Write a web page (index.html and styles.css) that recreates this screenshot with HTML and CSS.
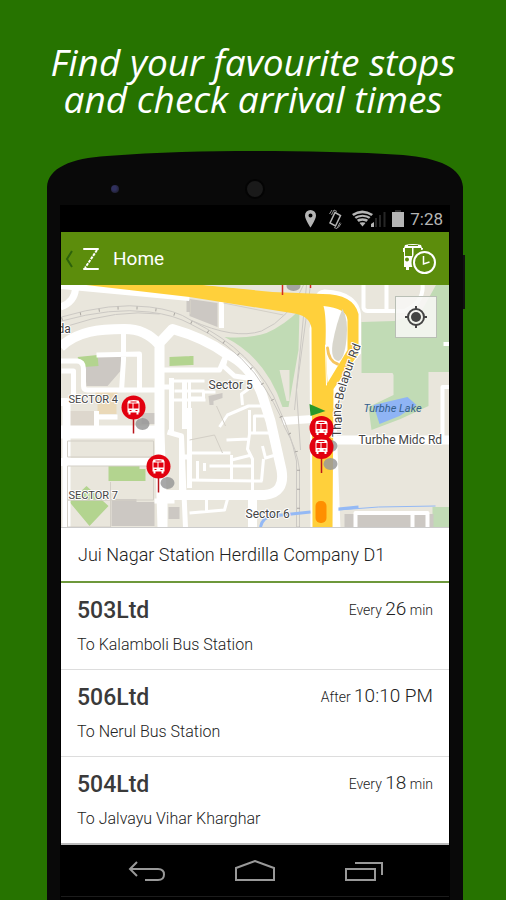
FILE: index.html
```html
<!DOCTYPE html>
<html lang="en">
<head>
<meta charset="utf-8">
<meta name="viewport" content="width=device-width, initial-scale=1">
<title>Home</title>
<link rel="stylesheet" href="styles.css">
</head>
<body>
<h1 class="headline">Find your favourite stops<br>and check arrival times</h1>
<main class="phone">
  <div class="cap">
    <svg class="cap-shape" viewBox="0 0 416 54" preserveAspectRatio="none" aria-hidden="true"><path d="M0 54V36C1 17 24 7 60 5C110 1 160 0 208 0S310 1 356 4C392 7 415 17 416 36V54Z"/></svg>
    <span class="sensor"></span>
    <span class="speaker"></span>
  </div>
  <span class="power"></span>
  <div class="screen">
    <div class="status">
      <svg width="84" height="20" viewBox="302 208 84 20" aria-hidden="true">
        <path fill="#b5b5b5" fill-rule="evenodd" d="M310.500 209a5.500 5.500 0 0 1 5.500 5.500c0 4-5.500 12-5.500 12s-5.500-8-5.500-12a5.500 5.500 0 0 1 5.500-5.500zm0 3.500a2 2 0 1 0 0 4 2 2 0 0 0 0-4z"/>
        <g fill="none" stroke="#b5b5b5"><path stroke-width="1.500" d="M335 211.500l5.500 3-5 10.500-5.500-3z"/><path stroke-width=".8" d="M331.500 214l2.500-5 3 1.500M329.500 213l2.500-4M334 226.500l3 1 3-6M338.500 226.500l2.500-4"/></g>
        <path fill="#b5b5b5" d="M352 213q10-7 21 0l-10.500 12.500z"/>
        <path fill="none" stroke="#000" stroke-width="1.300" d="M353 216q9.500-6 19 0M355 219q7.500-5 15 0M358 222q4.500-3 9 0"/>
        <path fill="#b5b5b5" d="M371 226v-3l3-2v5z"/><path stroke="#262626" stroke-width="2" d="M376 226v-9M380 226v-12M384.500 226v-15"/>
      </svg>
      <svg width="12" height="18" viewBox="0 0 12 18" aria-hidden="true"><path fill="#303030" d="M3 0h6v2H3z"/><path fill="#b5b5b5" d="M0 2h12v15H0z"/></svg>
      <time>7:28</time>
    </div>
    <header class="bar">
      <button class="up" aria-label="Back">
        <svg width="8" height="18" viewBox="0 0 8 18"><path d="M7 1L2 9l5 8" fill="none" stroke="#2d620b" stroke-width="2"/></svg>
        <svg width="16" height="22" viewBox="0 0 16 22"><path d="M1 1h14M1 21h14" fill="none" stroke="#fff" stroke-width="2" stroke-linecap="round"/><path d="M14 2L2 20" stroke="#fff" stroke-width="2" stroke-dasharray="3 1"/></svg>
      </button>
      <h2>Home</h2>
      <button class="schedule" aria-label="Arrival times">
        <svg width="36" height="32" viewBox="402 241 36 32"><path fill="#fff" fill-rule="evenodd" d="M405 243q8-2 16 0l1 3h1v4h-1v15h-13v3h-3v-3h-2v-15h-1v-4h1zm3 0v1h10v-1zm-3 3v8h7v-8zm8.500 0v8h7.500v-8zm-6.500 9.500a2 2 0 1 0 0 4 2 2 0 0 0 0-4z"/><circle cx="424.500" cy="260.500" r="13" fill="#5c8d0c"/><circle cx="424.500" cy="260.500" r="10.500" fill="#5c8d0c" stroke="#fff" stroke-width="2"/><path d="M423.500 254v8l6-2" fill="none" stroke="#fff" stroke-width="1.500"/></svg>
      </button>
    </header>
    <section class="map" aria-label="Stops map">
      <svg class="map-art" viewBox="61 285 389 242" preserveAspectRatio="xMidYMid slice">
        <defs>
          <path id="rd" d="M342 437V407Q346 384 359 352L366 334"/>
          <g id="stop">
            <path d="M0 10V26" stroke="#b8161c" stroke-width="1.500"/>
            <circle r="12" fill="#e2000f"/>
            <path fill="#fff" fill-rule="evenodd" d="M-5-7Q0-8 5-7L6-5V5H5V7H3V5H-3V7H-5V5H-6V-5ZM-3-6v1h6v-1zM-5-4V1H-1V-4ZM0-4V1H5V-4ZM-4 2.500v1h2v-1zM2 2.500v1h2v-1z"/>
          </g>
        </defs>
        <path fill="#e9e6dc" d="M61 284h389v244H61z"/>
        <g fill="#c1dbb5">
          <path d="M225 337q24 2 42-4 18-8 33-23l-1 40-10 57h-6q-17-50-58-70z"/>
          <path d="M362 322l33-1 26-8 16-29h13v88h-21v34l-28 13-29 11-3-23 25-12 0-20-1-2H362z"/>
          <path d="M433 507h17v20h-17z"/>
        </g>
        <path fill="#e9e6dc" d="M280 370h10v31h-3z"/>
        <path fill="#8fb4f5" d="M374 405l34-8 9 8-17 11-20 8z"/>
        <path fill="#ccc8c3" d="M190 299l28 4v24l-28-11zM187 300h4v12h-4zM100 356l23-2-2 17-13 15H87l-2-19zM112 499h25v27h-25zM137 502h18v24h-18zM169 507h11v12h-11zM209 396l14-3v5l-9 3v4h-4zM345 514h89v13h-89zM142 413h15v11h-15z"/>
        <path fill="#ddd7cd" d="M70 411h25v17H70z"/>
        <path fill="#ead9b8" d="M98 401h19v13H98zM96 390h22v10H96z"/>
        <g fill="#b3d48f"><path d="M78 357l20-2 1 11-15 1zM170 357l22-1v9l-22 1zM109 465h31v4h6v12h-37zM70 502l17-16 22 20-19 20zM190 356h4v9h-4z"/></g>
        <g fill="none" stroke="#fff" stroke-linejoin="round">
          <path stroke-width="8" d="M61 285L190 297"/>
          <path stroke-width="7" d="M76 289q-1 13-15 18"/>
          <path stroke-width="10" d="M61 347C78 331 100 329 125 329Q146 329 159 344L173 329Q205 338 227 354Q250 364 262 393L271 421 282 470Q286 493 265 495H163V527M160 342v90l3 95"/>
          <path stroke-width="13" d="M61 432h103"/>
          <path stroke-width="8" d="M61 462h104M61 402h6v125M283 421l30-2"/>
          <path stroke-width="5" d="M61 361h16q7 0 7 8v17q0 4 4 4h72v-1M97 355l43-1v37M124 331v29l-2 31M62 371h12v32M222 302v26M163 370h57l7-16M227 354l-3 12 11 10 19 3M97 411v23M98 417h20M163 387h9v-9M172 378v54M185 380v49M168 432l14 4 4 92M182 436v55M190 408v80M181 457h10M155 501h20"/>
          <path stroke-width="3" d="M173 381h32M175 391h30M190 380v29M190 398h14v-6h12M174 400h32M243 405l-1-11 7-5M220 427l8-12 21-9h17l3 6M250 410v24l-2 15 5 10v33M227 440l22-1M250 433h5v-17h13M254 433h16M210 466h43M190 480l73 1M263 446l3 12 10-3M264 459l-2 22M198 461v19M232 455v25M190 453h41M205 463v8M232 460l20-5M190 513l35-3 3-11M207 499v14"/>
          <path stroke-width="9" d="M253 496v31M333 440h117"/>
          <path stroke-width="4" d="M364 284v24q1 3 4 3h37q20-9 18-27M387 284v26M443 440v-53h7M444 344h6M356 527v-14h72v14M413 513v14M417 440v-2"/>
        </g>
        <g fill="none" stroke="#ccc9c4" stroke-width="1">
          <path d="M62 317Q112 302 150 307 176 310 191 320 225 337 245 357 270 382 280 410 291 432 297 461V527M62 321Q112 307 150 312 175 315 191 324 230 342 255 373 278 405 285 427 298 450 300 470V527M68 326Q118 309 160 314M191 320Q235 340 262 331 290 319 304 285M311 285L297 390 301 450M307 285L295 410"/>
          <path stroke="#aaa7a2" stroke-dasharray="1 18" stroke-width="3" d="M62 319Q112 304 150 309 176 312 191 322 230 342 250 366 273 395 284 423 298 445 299 466V527"/>
          <path stroke="#d3cfc6" d="M68 441h86v16H68zM68 466h86v34H68zM111 482v18M190 440l25-5 8 18M217 406l9 20M191 300v14M224 303l60 12M68 500h43v27H68z"/>
        </g>
        <g fill="none" stroke-linecap="round">
          <path stroke="#fff" stroke-width="22" d="M322 530L321 330"/>
          <path stroke="#fff" stroke-width="19" d="M325 299Q354 300 352 320V350Q331 375 329 400"/>
          <path stroke="#fff" stroke-width="8" d="M333 420L337 530"/>
          <path fill="#ffd03b" stroke="none" d="M78 284h115l80 8 50 2q31 0 36 20v40l-25 35-1 138h-20l-1-199q-2-13-20-15L190 297z"/>
          <path fill="#e9e6dc" stroke="none" d="M205 285h76l-1 6-42-3z"/>
          <path fill="#fff" stroke="none" d="M324 306q23 2 24 14v30l-20 33-2-40q1-27-2-37z"/>
          <path fill="#d8d6cc" stroke="none" d="M343 309q6 10 4 30-2 20-8 22-8-1-6-17 4-22 10-35z"/>
          <path stroke="#f6c55f" stroke-width="3" d="M328 348q1 13 10 16"/>
          <path stroke="#fff" stroke-width="1" d="M326 345l1 40"/>
        </g>
        <rect x="316" y="501" width="11" height="22" rx="5" fill="#ff8f00"/>
        <g fill="none" stroke="#94b9f5" stroke-width="3"><path d="M261 527q2-10 12-11l38-4M339 509l20-2"/><path stroke-width="1" d="M339 510l40-3 57-1"/></g>
        <g fill="#999" opacity=".85"><ellipse cx="294" cy="286" rx="7" ry="5"/><ellipse cx="143" cy="424" rx="7" ry="6"/><ellipse cx="168" cy="483" rx="7" ry="6"/><ellipse cx="331" cy="446" rx="7" ry="6"/><ellipse cx="331" cy="464" rx="7" ry="6"/></g>
        <path stroke="#d32b20" stroke-width="1.500" d="M283 285v10M311 285v3"/>
        <g class="labels">
          <text x="58" y="333" font-size="12">da</text>
          <text x="69" y="403" font-size="11">SECTOR 4</text>
          <text x="69" y="499" font-size="11">SECTOR 7</text>
          <text x="209" y="389" font-size="12">Sector 5</text>
          <text x="246" y="518" font-size="12">Sector 6</text>
          <text x="359" y="444" font-size="12">Turbhe Midc Rd</text>
          <text class="lake" x="364" y="412" font-size="11">Turbhe Lake</text>
          <text font-size="12"><textPath href="#rd">Thane-Belapur Rd</textPath></text>
        </g>
        <path fill="#29982a" d="M310 404l16 7-15 5z"/>
        <use href="#stop" x="134" y="407.500"/><use href="#stop" x="159" y="466.500"/><use href="#stop" x="322" y="428"/><use href="#stop" x="322" y="447"/>
      </svg>
      <button class="locate" aria-label="My location">
        <svg width="24" height="24" viewBox="0 0 24 24"><circle cx="12" cy="12" r="8" fill="none" stroke="#444" stroke-width="2"/><circle cx="12" cy="12" r="5" fill="#444"/><path d="M12 1v4M12 19v4M1 12h4M19 12h4" stroke="#444" stroke-width="2"/></svg>
      </button>
    </section>
    <h3 class="stop-name">Jui Nagar Station Herdilla Company D1</h3>
    <ul class="routes">
      <li><div class="line"><strong>503Ltd</strong><span class="when">Every <b>26</b> min</span></div><p>To Kalamboli Bus Station</p></li>
      <li><div class="line"><strong>506Ltd</strong><span class="when">After <b>10:10 PM</b></span></div><p>To Nerul Bus Station</p></li>
      <li><div class="line"><strong>504Ltd</strong><span class="when">Every <b>18</b> min</span></div><p>To Jalvayu Vihar Kharghar</p></li>
    </ul>
    <nav class="keys">
      <button aria-label="Back"><svg width="38" height="22" viewBox="0 0 38 22"><path d="M10 2L3 9l7 7M3 9h28q6 0 6 5.500T31 20H18"/></svg></button>
      <button aria-label="Home"><svg width="40" height="22" viewBox="0 0 40 22"><path d="M1 8L20 1l19 7v12H1z"/></svg></button>
      <button aria-label="Recent apps"><svg width="38" height="22" viewBox="0 0 38 22"><path d="M1 9h29v11H1zM10 3h27v12"/></svg></button>
    </nav>
  </div>
</main>
</body>
</html>
```

FILE: styles.css
```css
* { box-sizing: border-box; }
body {
  margin: 0;
  background: #267300;
  font-family: Roboto, "Liberation Sans", sans-serif;
  color: #222;
}
h1, h2, h3, p, ul { margin: 0; padding: 0; font-weight: 400; }
button { border: 0; padding: 0; background: none; display: flex; align-items: center; }
svg { display: block; }

.headline {
  padding-top: 43px;
  color: #fff;
  font: italic 400 37px/37px "Open Sans", "Noto Sans", sans-serif;
  text-align: center;
  white-space: nowrap;
}
.phone {
  position: relative;
  margin: 34px 43px 0 47px;
}
.cap {
  position: relative;
  display: grid;
  grid-template-columns: 1fr auto 1fr;
  align-items: center;
  height: 54px;
  padding-top: 22px;
}
.cap-shape { position: absolute; inset: 0; width: 100%; height: 54px; fill: #090909; }
.sensor, .speaker { position: relative; border-radius: 50%; }
.sensor { width: 8px; height: 8px; margin-left: 64px; background: radial-gradient(circle at 40% 40%, #30305e 30%, #171717); }
.speaker { width: 20px; height: 20px; background: #1a1a1a; border: 2px solid #040404; }
.power { position: absolute; left: 100%; top: 104px; width: 2px; height: 54px; background: #111; }
.screen {
  padding: 0 14px 4px;
  background: linear-gradient(90deg, #090909 13px, #000 13px, #000 calc(100% - 13px), #090909 calc(100% - 13px));
}
.status {
  display: flex;
  justify-content: flex-end;
  align-items: center;
  gap: 6px;
  height: 27px;
  padding-right: 6px;
  color: #b5b5b5;
  font-size: 17px;
}
.bar {
  display: flex;
  align-items: center;
  height: 53px;
  padding: 0 11px 0 4px;
  background: #5c8d0c;
}
.up { gap: 10px; }
.bar h2 { flex: 1; margin-left: 14px; color: #fff; font-size: 19px; line-height: 24px; }
.map { position: relative; }
.map-art { width: 100%; height: 242px; }
.labels { fill: #444; stroke: #fff; stroke-width: 2px; stroke-linejoin: round; paint-order: stroke; }
.labels .lake { fill: #34608c; stroke: none; font-style: italic; }
.locate {
  position: absolute;
  top: 11px;
  right: 12px;
  width: 42px;
  height: 42px;
  justify-content: center;
  background: rgba(247, 247, 245, .88);
  border: 1px solid #b9bfb5;
}
.stop-name {
  padding: 0 17px;
  border-top: 1px solid #ccc;
  border-bottom: 2px solid #6d983b;
  background: #fff;
  font-size: 18px;
  font-weight: 300;
  line-height: 53px;
}
.routes { list-style: none; background: #fff; border-bottom: 2px solid #bbb; }
.routes li { padding: 14px 16px 12px; border-bottom: 1px solid #ddd; }
.routes li:last-child { border-bottom: 0; }
.line { display: flex; justify-content: space-between; line-height: 28px; }
.line strong { font-size: 23px; font-weight: 500; color: #3a3a3a; }
.when { font-size: 14px; font-weight: 300; line-height: 24px; }
.when b { font-size: 19px; font-weight: 300; }
.routes p { padding-top: 8px; font-size: 16px; font-weight: 300; line-height: 24px; }
.keys {
  display: grid;
  grid-template-columns: repeat(3, 109px);
  justify-content: center;
  height: 52px;
  border-bottom: 1px solid #1c1c1c;
}
.keys button { justify-content: center; }
.keys svg { fill: none; stroke: #999; stroke-width: 2; }
```
